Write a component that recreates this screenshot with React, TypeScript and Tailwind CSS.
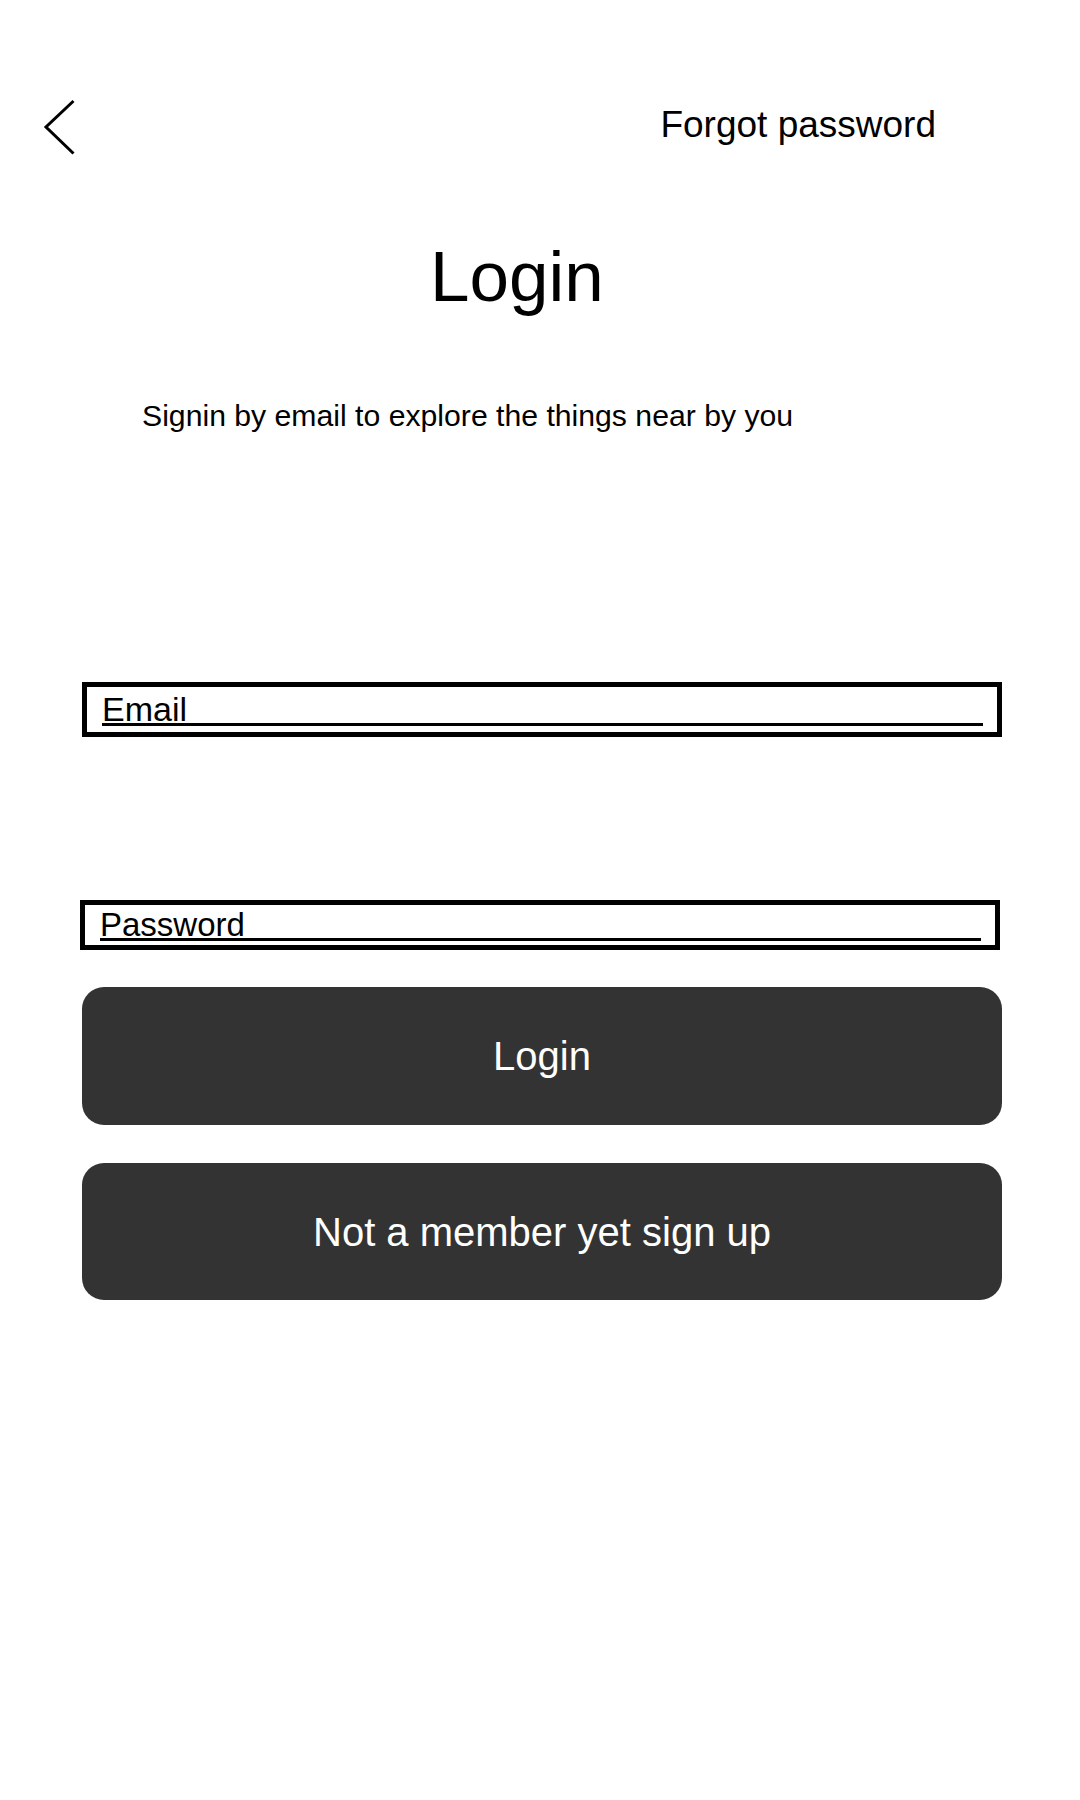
import { useState } from 'react'

export default function App() {
  const [email] = useState('Email')
  const [password] = useState('Password')

  return (
    <div className="w-[1080px] h-[1800px] bg-white text-black font-['Liberation_Sans',Arial,sans-serif]">
      {/* 상단 바 */}
      <div className="flex items-start pt-[99px] pl-[42px] pr-[144px]">
        <button className="block">
          <svg width="36" height="56" viewBox="0 0 36 56" fill="none">
            <polyline points="31.5,2 4,28 31.5,54.5" stroke="#000" strokeWidth="3" strokeLinejoin="miter" />
          </svg>
        </button>
        <span className="ml-auto mt-[7px] text-[37px] leading-none">Forgot password</span>
      </div>

      <h1 className="mt-[86px] pl-[430px] text-[71px] leading-none font-normal">Login</h1>

      <p className="mt-[89px] pl-[142px] text-[30.2px] leading-none">
        Signin by email to explore the things near by you
      </p>

      {/* 입력 */}
      <div className="mt-[251px] ml-[82px] w-[920px] border-[5px] border-black pt-[8px] pb-[6px] pl-[15px] pr-[14px]">
        <div className="text-[34px] leading-[28px] border-b-[3px] border-black">{email}</div>
      </div>

      <div className="mt-[163px] ml-[80px] w-[920px] border-[5px] border-black pt-[7px] pb-[4px] pl-[15px] pr-[14px]">
        <div className="text-[33px] leading-[26px] border-b-[3px] border-black">{password}</div>
      </div>

      <div className="flex flex-col gap-[38px] mt-[37px] ml-[82px] w-[920px]">
        <button className="h-[138px] rounded-[22px] bg-[#333333] text-white text-[40px] leading-none flex items-center justify-center">
          Login
        </button>
        <button className="h-[137px] rounded-[22px] bg-[#333333] text-white text-[40px] leading-none flex items-center justify-center">
          Not a member yet sign up
        </button>
      </div>
    </div>
  )
}
